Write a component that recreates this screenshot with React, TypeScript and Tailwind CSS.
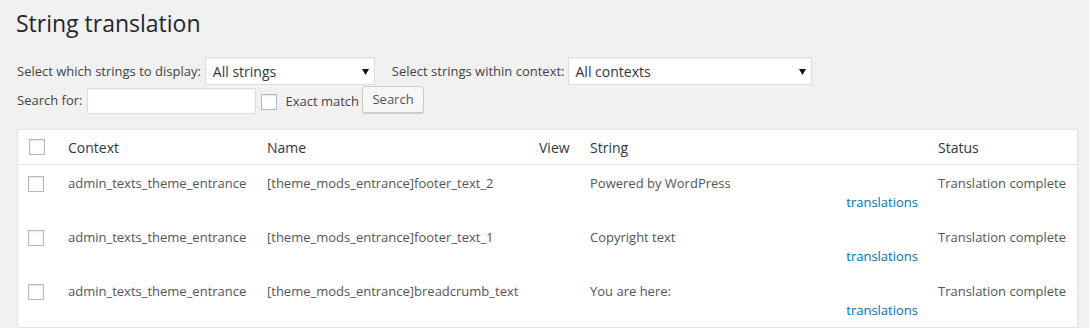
import React from "react";

function Check({ className = "" }: { className?: string }) {
  return (
    <div
      className={
        "w-[16px] h-[16px] bg-white border border-[#b4b9be] shadow-[inset_0_1px_2px_rgba(0,0,0,0.1)] " +
        className
      }
    />
  );
}

function FakeSelect({ text, width }: { text: string; width: string }) {
  return (
    <div
      className={
        "h-[28px] bg-white border border-[#ddd] shadow-[inset_0_1px_2px_rgba(0,0,0,0.07)] flex items-center justify-between pl-[7px] pr-[5px] text-[14px] text-[#32373c] " +
        width
      }
    >
      <span className="leading-[28px] mt-[1px]">{text}</span>
      <svg width="7" height="6" viewBox="0 0 7 6" className="mt-[1px]">
        <polygon points="0,0 7,0 3.5,6" fill="#111" />
      </svg>
    </div>
  );
}

const rows = [
  {
    context: "admin_texts_theme_entrance",
    name: "[theme_mods_entrance]footer_text_2",
    str: "Powered by WordPress",
  },
  {
    context: "admin_texts_theme_entrance",
    name: "[theme_mods_entrance]footer_text_1",
    str: "Copyright text",
  },
  {
    context: "admin_texts_theme_entrance",
    name: "[theme_mods_entrance]breadcrumb_text",
    str: "You are here:",
  },
];

const cols = "grid grid-cols-[40px_199px_272px_51px_348px_149px]";

export default function App() {
  return (
    <div className="w-[1089px] h-[328px] overflow-hidden bg-[#f1f1f1] font-['Open_Sans',sans-serif] text-[13px] text-[#444] pl-[17px] pr-[11px]">
      <h1 className="pt-[8px] text-[23px] leading-[30px] font-normal text-[#23282d] -ml-[1px]">
        String translation
      </h1>

      <div className="mt-[19px] flex items-center h-[28px]">
        <span className="leading-[19px]">Select which strings to display:</span>
        <div className="ml-[4px]">
          <FakeSelect text="All strings" width="w-[170px]" />
        </div>
        <span className="ml-[17px] leading-[19px]">Select strings within context:</span>
        <div className="ml-[3px]">
          <FakeSelect text="All contexts" width="w-[244px]" />
        </div>
      </div>

      <div className="mt-[1px] flex items-start h-[28px]">
        <span className="mt-[5px] leading-[19px]">Search for:</span>
        <div className="ml-[5px] mt-[2px] w-[169px] h-[26px] bg-white border border-[#ddd] shadow-[inset_0_1px_2px_rgba(0,0,0,0.07)]" />
        <Check className="ml-[5px] mt-[8px]" />
        <span className="ml-[8px] mt-[6px] leading-[19px]">Exact match</span>
        <button className="ml-[3px] w-[62px] h-[27px] bg-[#f7f7f7] border border-[#ccc] rounded-[3px] shadow-[0_1px_0_#ccc] text-[13px] text-[#555] leading-[25px]">
          Search
        </button>
      </div>

      <div className="mt-[15px] bg-white border border-[#e5e5e5] shadow-[0_1px_1px_rgba(0,0,0,0.04)]">
        <div className={cols + " h-[35px] border-b border-[#e1e1e1] text-[14px] text-[#32373c] leading-[19.6px]"}>
          <div className="pl-[11px] pt-[9px]">
            <Check />
          </div>
          <div className="px-[10px] pt-[8px]">Context</div>
          <div className="px-[10px] pt-[8px]">Name</div>
          <div className="px-[10px] pt-[8px]">View</div>
          <div className="px-[10px] pt-[8px]">String</div>
          <div className="px-[10px] pt-[8px]">Status</div>
        </div>
        {rows.map((r, i) => (
          <div key={i} className={cols + " h-[54px] text-[13px] text-[#555] leading-[19px]"}>
            <div className="pl-[10px] pt-[11px]">
              <Check />
            </div>
            <div className="px-[10px] pt-[9px] whitespace-nowrap">{r.context}</div>
            <div className="px-[10px] pt-[9px] whitespace-nowrap">{r.name}</div>
            <div className="px-[10px] pt-[9px]"></div>
            <div className="px-[10px] pt-[9px]">
              <div>{r.str}</div>
              <div className="text-right">
                <a className="text-[#0073aa]">translations</a>
              </div>
            </div>
            <div className="px-[10px] pt-[9px] whitespace-nowrap">Translation complete</div>
          </div>
        ))}
      </div>
    </div>
  );
}
